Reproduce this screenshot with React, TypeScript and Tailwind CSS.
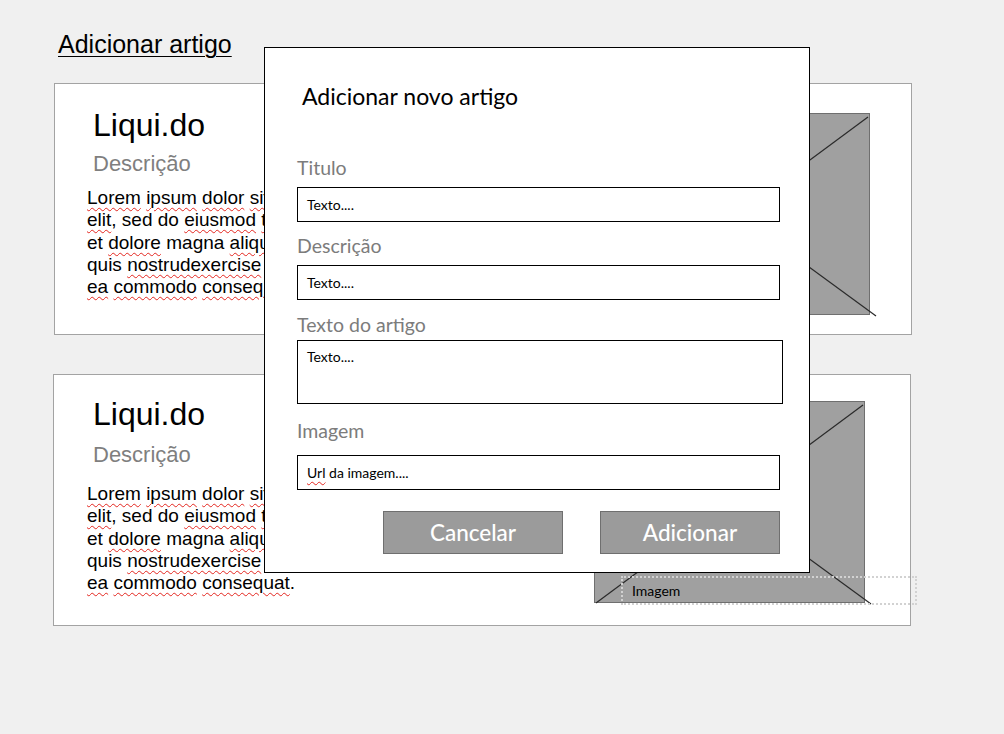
const Typo = ({ children }: { children: React.ReactNode }) => (
  <span className="underline decoration-wavy decoration-[#e3261f] decoration-1 underline-offset-[3px]">
    {children}
  </span>
);

// only the part left of the dialog is visible, so the lines are clipped there
const Lorem = () => (
  <div className="w-[212px] pb-[5px] overflow-hidden whitespace-nowrap text-[19px] leading-[22.25px] text-black">
    <div>
      <Typo>Lorem</Typo> <Typo>ipsum</Typo> <Typo>dolor</Typo> <Typo>sit</Typo>
    </div>
    <div>
      <Typo>elit</Typo>, sed do <Typo>eiusmod</Typo> <Typo>tempor</Typo>
    </div>
    <div>
      et <Typo>dolore</Typo> magna <Typo>aliqua</Typo>.
    </div>
    <div>
      quis <Typo>nostrudexercise</Typo>
    </div>
    <div>
      <Typo>ea</Typo> <Typo>commodo</Typo> <Typo>consequat</Typo>.
    </div>
  </div>
);

const Placeholder = ({ className }: { className: string }) => (
  <div className={`relative w-[271px] h-[202px] shrink-0 bg-[#a0a0a0] border border-[#6f6f6f] ${className}`}>
    <svg className="absolute inset-0 overflow-visible" width="271" height="202" viewBox="0 0 271 202">
      <line x1="1" y1="201" x2="268" y2="3" stroke="#2a2a2a" strokeWidth="1.2" />
      <line x1="0" y1="0" x2="276" y2="202" stroke="#2a2a2a" strokeWidth="1.2" />
    </svg>
  </div>
);

const Field = ({ label, text, mt, lmt, tall }: { label: string; text: string; mt: string; lmt: string; tall?: boolean }) => (
  <>
    <div className={`${lmt} text-[19.5px] leading-[20px] text-[#7c7c7c]`}>{label}</div>
    <div
      className={`${mt} border border-black bg-white text-[14px] text-black pl-[9px] ${
        tall ? "w-[486px] h-[64px] pt-[7px] leading-[17px]" : "w-[483px] h-[35px] flex items-center"
      }`}
    >
      {text}
    </div>
  </>
);

const Modal = () => (
  <div className="absolute left-[264px] top-[47px] w-[546px] h-[526px] bg-white border border-black pl-[32px] pt-[36px] font-['Lato',sans-serif]">
    <div className="ml-[5px] text-[23px] leading-[24px] text-black">Adicionar novo artigo</div>
    <Field label="Titulo" text="Texto...." lmt="mt-[50px]" mt="mt-[9px]" />
    <Field label="Descrição" text="Texto...." lmt="mt-[14px]" mt="mt-[9px]" />
    <Field label="Texto do artigo" text="Texto...." lmt="mt-[15px]" mt="mt-[5px]" tall />
    <div className="mt-[17px] text-[19.5px] leading-[20px] text-[#7c7c7c]">Imagem</div>
    <div className="mt-[14px] w-[483px] h-[35px] flex items-center border border-black pl-[9px] text-[14px] text-black">
      <span className="underline decoration-wavy decoration-[#e3261f] decoration-1 underline-offset-[3px]">Url</span>
      &nbsp;da imagem....
    </div>
    <div className="mt-[21px] w-[483px] flex justify-end gap-[37px]">
      <div className="w-[180px] h-[43px] bg-[#9b9b9b] border border-[#6f6f6f] flex items-center justify-center text-white text-[22.5px] font-medium">
        Cancelar
      </div>
      <div className="w-[180px] h-[43px] bg-[#9b9b9b] border border-[#6f6f6f] flex items-center justify-center text-white text-[22.5px] font-medium">
        Adicionar
      </div>
    </div>
  </div>
);

export default function App() {
  return (
    <div className="relative w-[1004px] h-[734px] bg-[#f0f0f0] overflow-hidden font-['Liberation_Sans',Arial,sans-serif]">
      <div className="pt-[29px] pl-[58px] text-[25px] leading-[30px] text-black">
        <span className="underline underline-offset-[3px] decoration-1">Adicionar artigo</span>
      </div>

      <div className="mt-[24px] ml-[54px] w-[858px] h-[252px] bg-white border border-[#a3a3a3] flex">
        <div className="flex-1 pl-[38px] pt-[25px]">
          <div className="text-[32px] leading-[32px] text-black">Liqui.do</div>
          <div className="mt-[12px] text-[22px] leading-[22px] text-[#7f7f7f]">Descrição</div>
          <div className="mt-[12px] -ml-[6px]">
            <Lorem />
          </div>
        </div>
        <Placeholder className="mt-[29px] mr-[41px]" />
      </div>

      <div className="relative mt-[39px] ml-[53px] w-[858px] h-[252px] bg-white border border-[#a3a3a3] flex">
        <div className="flex-1 pl-[39px] pt-[23px]">
          <div className="text-[32px] leading-[32px] text-black">Liqui.do</div>
          <div className="mt-[14px] text-[22px] leading-[22px] text-[#7f7f7f]">Descrição</div>
          <div className="mt-[17px] -ml-[6px]">
            <Lorem />
          </div>
        </div>
        <Placeholder className="mt-[26px] mr-[45px]" />
        <div className="absolute left-[567px] top-[201px] w-[296px] h-[29px] border-2 border-dotted border-[#d2d2d2] pl-[9px] flex items-center font-['Lato',sans-serif] text-[14px] text-black">
          Imagem
        </div>
      </div>

      <Modal />
    </div>
  );
}
